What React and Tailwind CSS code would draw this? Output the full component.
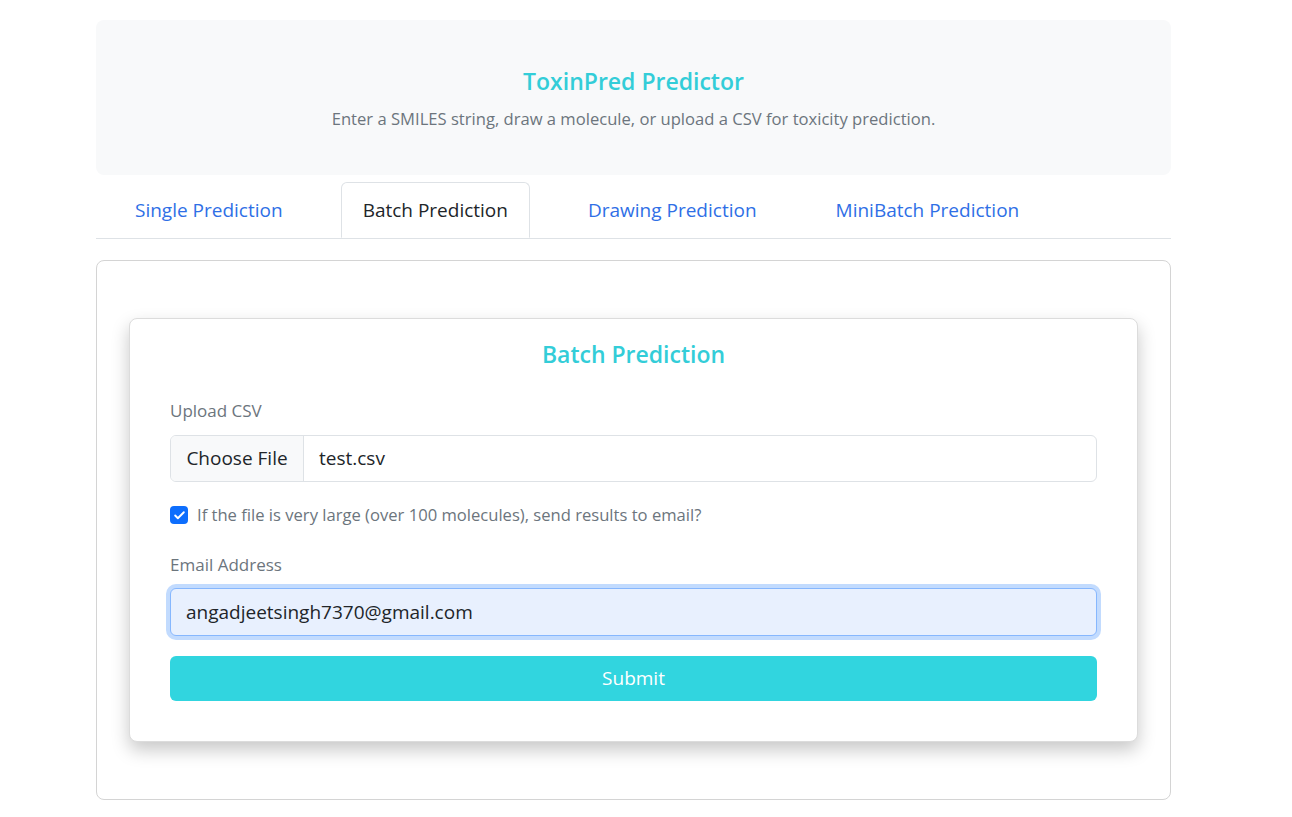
import { Check } from 'lucide-react';

const tabs = ['Single Prediction', 'Batch Prediction', 'Drawing Prediction', 'MiniBatch Prediction'];

export default function App() {
  const active = 'Batch Prediction';

  return (
    <div className="min-h-screen bg-white font-['Open_Sans',sans-serif] pt-5">
      <div className="w-[1075px] ml-[96px]">
        {/* Header */}
        <div className="bg-[#f8f9fa] rounded-lg h-[155px] flex flex-col items-center pt-[46px]">
          <h1 className="text-[23px] leading-[30px] font-semibold text-[#33cdd8]">ToxinPred Predictor</h1>
          <p className="mt-[11px] text-[16.6px] leading-[24px] text-[#6c757d]">
            Enter a SMILES string, draw a molecule, or upload a CSV for toxicity prediction.
          </p>
        </div>

        {/* Tabs */}
        <div className="mt-[7px] border-b border-[#dee2e6] flex gap-[37px] pl-[18px]">
          {tabs.map((t) =>
            t === active ? (
              <div
                key={t}
                className="h-[56px] -mb-px px-[21px] flex items-center text-[19px] text-[#212529] bg-white border border-[#dee2e6] border-b-white rounded-t-md"
              >
                {t}
              </div>
            ) : (
              <div key={t} className="h-[56px] px-[21px] flex items-center text-[19px] text-[#2f6fe6]">
                {t}
              </div>
            )
          )}
        </div>

        {/* Main card */}
        <div className="mt-[21px] border border-[#d4d4d4] rounded-lg px-[32px] py-[57px]">
          <div className="bg-white border border-[#dcdcdc] rounded-lg shadow-[0_8px_18px_rgba(0,0,0,0.22)] px-[40px] pt-[20px] pb-[40px]">
            <h2 className="text-center text-[23px] leading-[30px] font-semibold text-[#33cdd8]">Batch Prediction</h2>

            <label className="block mt-[30px] text-[17px] leading-[24px] text-[#6c757d]">Upload CSV</label>
            <div className="mt-[12px] h-[47px] flex border border-[#dee2e6] rounded-md overflow-hidden text-[19px] text-[#212529]">
              <div className="w-[133px] bg-[#f8f9fa] border-r border-[#dee2e6] flex items-center justify-center">
                Choose File
              </div>
              <div className="flex items-center pl-[15px]">test.csv</div>
            </div>

            <div className="mt-[21px] h-[24px] flex items-center gap-[9px]">
              <span className="w-[18px] h-[18px] rounded-[4px] bg-[#0d6efd] flex items-center justify-center">
                <Check className="w-[13px] h-[13px] text-white" strokeWidth={3.5} />
              </span>
              <span className="text-[16.6px] leading-[24px] text-[#6c757d]">
                If the file is very large (over 100 molecules), send results to email?
              </span>
            </div>

            <label className="block mt-[26px] text-[17px] leading-[24px] text-[#6c757d]">Email Address</label>
            <div className="mt-[11px] h-[48px] flex items-center px-[15px] bg-[#e8f0fe] border border-[#86b7fe] rounded-md ring-4 ring-[#c2dbfe] text-[19px] text-[#212529]">
              angadjeetsingh7370@gmail.com
            </div>

            <button className="mt-[20px] w-full h-[45px] rounded-md bg-[#31d5df] text-white text-[19px]">
              Submit
            </button>
          </div>
        </div>
      </div>
    </div>
  );
}
